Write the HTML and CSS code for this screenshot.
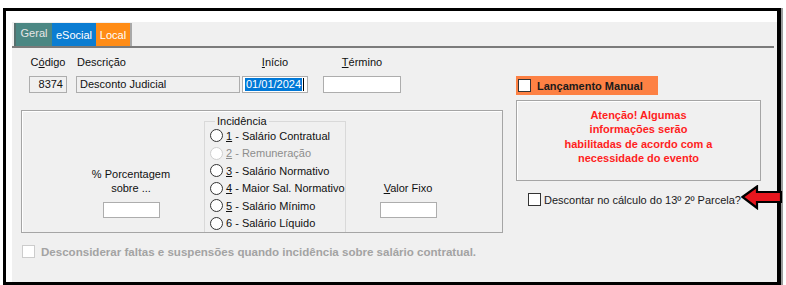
FILE: index.html
```html
<!DOCTYPE html>
<html lang="pt-BR">
<head>
  <meta charset="UTF-8">
  <title>Evento</title>
  <link rel="stylesheet" href="styles.css">
</head>
<body>

  <div class="frame">
    <div class="window">

      <div class="tabbar">
        <div class="tab tabGeral">Geral</div>
        <div class="tab tabSocial">eSocial</div>
        <div class="tab tabLocal">Local</div>
      </div>

      <div class="content">
        <div class="left">

          <div class="fieldRow">
            <div class="fld fldCodigo">
              <span class="lbl">C<u>ó</u>digo</span>
              <div class="box boxGray alignRight">8374</div>
            </div>
            <div class="fld fldDesc">
              <span class="lbl lblLeft">Descrição</span>
              <div class="box boxGray">Desconto Judicial</div>
            </div>
            <div class="fld fldInicio">
              <span class="lbl"><u>I</u>nício</span>
              <div class="box"><span class="sel">01/01/2024</span><span class="caret"></span></div>
            </div>
            <div class="fld fldTermino">
              <span class="lbl"><u>T</u>érmino</span>
              <div class="box"></div>
            </div>
          </div>

          <div class="bigBox">
            <div class="pctCol">
              <span class="txt">% Porcentagem</span>
              <span class="txt">sobre ...</span>
              <div class="box smallBox"></div>
            </div>

            <fieldset class="grp">
              <legend>Incidência</legend>
              <div class="radioRow"><span class="radio"></span><span><u>1</u> - Salário Contratual</span></div>
              <div class="radioRow disabled"><span class="radio"></span><span><u>2</u> - Remuneração</span></div>
              <div class="radioRow"><span class="radio"></span><span><u>3</u> - Salário Normativo</span></div>
              <div class="radioRow"><span class="radio"></span><span><u>4</u> - Maior Sal. Normativo</span></div>
              <div class="radioRow"><span class="radio"></span><span><u>5</u> - Salário Mínimo</span></div>
              <div class="radioRow"><span class="radio"></span><span>6 - Salário Líquido</span></div>
            </fieldset>

            <div class="fixoCol">
              <span class="txt"><u>V</u>alor Fixo</span>
              <div class="box smallBox"></div>
            </div>
          </div>

          <div class="bottomRow">
            <span class="check checkOff"></span>
            <span>Desconsiderar faltas e suspensões quando incidência sobre salário contratual.</span>
          </div>
        </div>

        <div class="right">
          <div class="manual">
            <span class="check"></span>
            <span>Lançamento Manual</span>
          </div>
          <div class="msg">
            Atenção! Algumas<br>
            informações serão<br>
            habilitadas de acordo com a<br>
            necessidade do evento
          </div>
          <div class="descRow">
            <span class="check"></span>
            <span>Descontar no cálculo do 13º 2º Parcela?</span>
          </div>
        </div>
      </div>

    </div>

    <!-- pointer drawn over the frame -->
    <svg class="arrow" width="42" height="26" viewBox="0 0 42 26">
      <polygon points="1.5,12 16,1.5 16,7 40,7 40,17 16,17 16,23 " fill="#e8161e" stroke="#000" stroke-width="2.2" stroke-linejoin="miter"/>
    </svg>
  </div>

</body>
</html>
```

FILE: styles.css
```css
body {
  margin: 0;
  font-family: "Liberation Sans", Arial, sans-serif;
  font-size: 11px;
  color: #111;
  background: #fff;
  overflow: hidden;
}

u {
  text-decoration-thickness: 1px;
  text-underline-offset: 1px;
}

.frame {
  position: relative;
  margin: 8px 0 0 3px;
  width: 778px;
  height: 277px;
  box-sizing: border-box;
  border: 3px solid #000;
  border-right-width: 4px;
  box-shadow: 2px 0 0 #9c9c9c;
  background: #fff;
  padding: 11px 0 0 6px;
}

.window {
  background: #f0f0f0;
  height: 100%;
}

/* tabs */
.tabbar {
  display: flex;
  height: 26px;
  box-sizing: border-box;
  padding: 1px 0 0 2px;
  margin-right: 3px;
  border-bottom: 2px solid #7b7b7b;
}

.tab {
  height: 23px;
  box-sizing: border-box;
  padding: 6px 0 0 0;
  color: #fff;
  text-align: center;
  line-height: 13px;
}

.tabGeral {
  width: 38px;
  padding-top: 4px;
  background: #4b8783;
  color: #e6e6e6;
  border-left: 2px solid #56706e;
}

.tabSocial {
  width: 44px;
  background: #0b7dd2;
}

.tabLocal {
  width: 36px;
  background: #ff8c16;
  border-right: 2px solid #a8a8a8;
}

/* body */
.content {
  display: flex;
  padding: 7px 0 0 9px;
}

.left {
  width: 482px;
}

.fieldRow {
  display: flex;
  margin-left: 8px;
}

.fld {
  display: flex;
  flex-direction: column;
}

.lbl {
  line-height: 14px;
  height: 14px;
  margin-bottom: 7px;
  text-align: center;
}

.lblLeft {
  text-align: left;
  padding-left: 1px;
}

.fldCodigo { width: 38px; }
.fldDesc { width: 164px; margin-left: 9px; }
.fldInicio { width: 66px; margin-left: 2px; }
.fldTermino { width: 78px; margin-left: 15px; }

.box {
  height: 17px;
  box-sizing: border-box;
  border: 1px solid #adadad;
  background: #fff;
  line-height: 15px;
  padding: 0 3px;
  white-space: nowrap;
  overflow: hidden;
}

.boxGray {
  background: #f0f0f0;
}

.alignRight {
  text-align: right;
}

.fldInicio .box {
  padding: 1px 1px 0 2px;
  line-height: 13px;
}

.sel {
  display: inline-block;
  background: #0078d7;
  color: #fff;
  padding: 0 1px;
}

.caret {
  display: inline-block;
  width: 1px;
  height: 13px;
  background: #000;
  vertical-align: top;
  margin-left: 1px;
}

/* central group */
.bigBox {
  display: flex;
  margin-top: 17px;
  height: 123px;
  box-sizing: border-box;
  border: 1px solid #a5a5a5;
  box-shadow: inset 1px 1px 0 #fff;
}

.txt {
  line-height: 14px;
  text-align: center;
}

.smallBox {
  width: 57px;
  height: 16px;
  margin-top: 7px;
}

.pctCol {
  width: 182px;
  box-sizing: border-box;
  padding: 0 0 14px 36px;
  display: flex;
  flex-direction: column;
  align-items: center;
  justify-content: flex-end;
}

.grp {
  width: 142px;
  box-sizing: border-box;
  margin: 4px 0 0 0;
  padding: 0 0 0 5px;
  border: 1px solid #d9d9d9;
  border-bottom: none;
  min-width: 0;
}

.grp legend {
  padding: 0 2px;
  margin-left: 5px;
  line-height: 12px;
}

.radioRow {
  display: flex;
  align-items: center;
  height: 17.5px;
  white-space: nowrap;
}

.radio {
  width: 13px;
  height: 13px;
  box-sizing: border-box;
  border: 1px solid #333;
  border-radius: 50%;
  background: #fff;
  margin-right: 3px;
}

.disabled {
  color: #8d8d8d;
}

.disabled .radio {
  border-color: #cfcfcf;
}

.fixoCol {
  flex: 1;
  box-sizing: border-box;
  padding: 0 32px 14px 0;
  display: flex;
  flex-direction: column;
  align-items: center;
  justify-content: flex-end;
}

.check {
  width: 13px;
  height: 13px;
  box-sizing: border-box;
  border: 1px solid #333;
  background: #fff;
  flex: none;
}

.bottomRow {
  display: flex;
  align-items: center;
  margin: 12px 0 0 1px;
  font-size: 11.55px;
  font-weight: bold;
  color: #a3a3a3;
}

.bottomRow .check {
  margin-right: 6px;
}

.checkOff {
  border-color: #cccccc;
}

/* right column */
.right {
  margin-left: 13px;
  width: 245px;
}

.manual {
  display: flex;
  align-items: center;
  width: 142px;
  height: 19px;
  margin-top: 21px;
  background: #fd8144;
  font-weight: bold;
  color: #1a1a1a;
}

.manual .check {
  margin: 0 6px 0 2px;
}

.msg {
  margin-top: 5px;
  height: 81px;
  box-sizing: border-box;
  border: 1px solid #a5a5a5;
  box-shadow: inset 1px 1px 0 #fff;
  padding-top: 7px;
  text-align: center;
  line-height: 14.4px;
  font-weight: bold;
  color: #ff1e1e;
}

.descRow {
  display: flex;
  align-items: center;
  margin: 12px 0 0 12px;
  color: #1a1a22;
}

.descRow .check {
  margin-right: 3px;
}

.arrow {
  position: absolute;
  left: 735px;
  top: 174px;
}
```
